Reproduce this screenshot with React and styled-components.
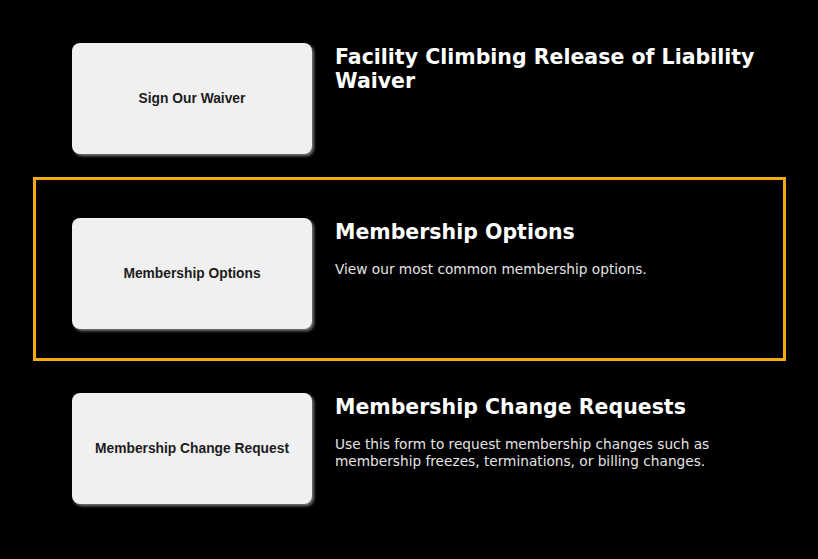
import styled, { createGlobalStyle, css } from "styled-components"

const GlobalStyle = createGlobalStyle`
  html, body {
    margin: 0;
    background: #000;
  }
`;

const items = [
  { button: "Sign Our Waiver", title: "Facility Climbing Release of Liability Waiver" },
  { button: "Membership Options", title: "Membership Options", text: "View our most common membership options.", active: true },
  {
    button: "Membership Change Request",
    title: "Membership Change Requests",
    text: "Use this form to request membership changes such as membership freezes, terminations, or billing changes.",
  },
];

function App () {
  return (
    <>
      <GlobalStyle />
      <Page>
        {items.map((item) => (
          <Row key={item.button} $active={item.active}>
            <Button>{item.button}</Button>
            <Info>
              <Title>{item.title}</Title>
              {item.text && <Text>{item.text}</Text>}
            </Info>
          </Row>
        ))}
      </Page>
    </>
  )
}

export default App;

const Page = styled.div`
  width: 747px;
  padding: 6px 0 0 36px;
  min-height: 553px;
  background: #000;
`;

const Row = styled.div`
  position: relative;
  display: flex;
  gap: 23px;
  height: 175px;
  box-sizing: border-box;
  padding: 37px 0 0 36px;

  ${(p) =>
    p.$active &&
    css`
      &::after {
        content: "";
        position: absolute;
        inset: -4px -3px -5px -3px;
        border: 3px solid #f5aa14;
        pointer-events: none;
      }
    `}
`;

const Button = styled.button`
  flex: none;
  width: 240px;
  height: 111px;
  background: #f0f0f0;
  border: none;
  border-radius: 8px;
  box-shadow: 2px 2px 3px #777;
  color: #1c1c1c;
  font: bold 13.8px "Liberation Sans", Arial, sans-serif;
  cursor: pointer;
`;

const Info = styled.div`
  display: flex;
  flex-direction: column;
  max-width: 450px;
  padding-top: 2px;
  font-family: "DejaVu Sans", Verdana, sans-serif;
`;

const Title = styled.h2`
  margin: 0;
  font-size: 20.5px;
  line-height: 24px;
  font-weight: bold;
  color: #fff;
`;

const Text = styled.p`
  margin: 17px 0 0;
  font-size: 13.7px;
  line-height: 17px;
  color: #e4e4e4;
`;
